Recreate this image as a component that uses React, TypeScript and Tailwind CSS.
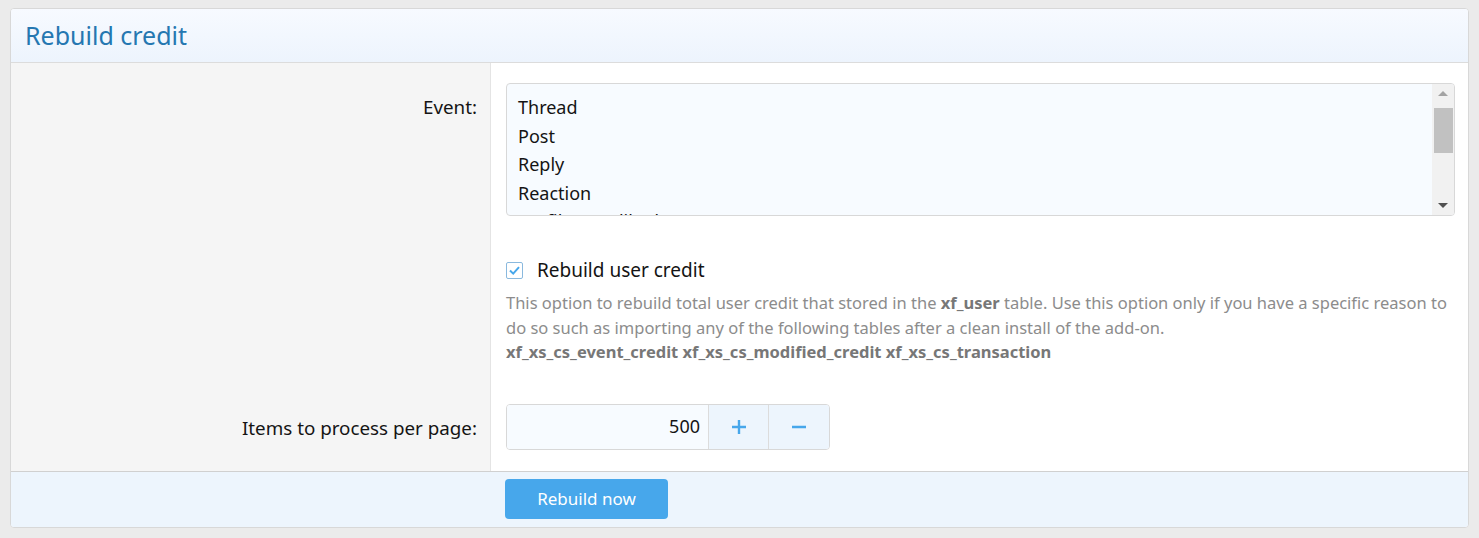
const FONT = { fontFamily: '"Noto Sans", "Open Sans", sans-serif' };

const events = ["Thread", "Post", "Reply", "Reaction", "Profile post liked"];

function FakeScrollbar() {
  return (
    <div className="flex w-[22px] shrink-0 flex-col items-center bg-[#f1f1f1]">
      <svg width="20" height="18" viewBox="0 0 20 18" className="shrink-0">
        <path d="M5 12 L10 7 L15 12 Z" fill="#a3a3a3" />
      </svg>
      <div className="mt-[6px] h-[45px] w-[19px] bg-[#c1c1c1]" />
      <div className="flex-1" />
      <svg width="20" height="18" viewBox="0 0 20 18" className="shrink-0">
        <path d="M5 6 L10 11 L15 6 Z" fill="#505050" />
      </svg>
    </div>
  );
}

function Label({ children, pt }: { children: string; pt: string }) {
  return (
    <div className={`w-[480px] shrink-0 border-r border-[#e4e4e4] bg-[#f5f5f5] pr-[13px] text-right text-[18.8px] leading-[28px] text-[#141414] ${pt}`}>
      {children}
    </div>
  );
}

export default function App() {
  return (
    <div className="min-h-[538px] w-full bg-[#ebebeb] px-[10px] pt-[8px]" style={FONT}>
      <div className="overflow-hidden rounded-[4px] border border-[#d8d8d8] bg-white">
        {/* header */}
        <div className="h-[54px] border-b border-[#dcdcdc] bg-gradient-to-b from-[#f7faff] to-[#edf4fd] pl-[14px] pt-[10px]">
          <h2 className="text-[25px] leading-[32px] text-[#2577b1]">Rebuild credit</h2>
        </div>

        {/* Event */}
        <div className="flex">
          <Label pt="pt-[30px]">Event:</Label>
          <div className="flex-1 pl-[15px] pr-[13px] pt-[20px] pb-[22px]">
            <div className="flex h-[133px] overflow-hidden rounded-[4px] border border-[#d8d8d8] bg-[#f7fbff]">
              <div className="h-full flex-1 overflow-hidden px-[11px] pt-[9px] text-[18px] leading-[28.5px] text-[#141414]">
                {events.map((e) => (
                  <div key={e}>{e}</div>
                ))}
              </div>
              <FakeScrollbar />
            </div>
          </div>
        </div>

        {/* Rebuild user credit */}
        <div className="flex">
          <Label pt="pt-[20px]"> </Label>
          <div className="flex-1 pl-[15px] pr-[13px] pt-[20px] pb-[18px]">
            <label className="flex h-[24px] items-center gap-[14px] text-[19px] text-[#141414]">
              <svg width="17" height="17" viewBox="0 0 17 17" className="shrink-0">
                <rect x="0.5" y="0.5" width="16" height="16" rx="1.5" fill="#fff" stroke="#8ab9de" />
                <path d="M4 8.5 L7.2 11.6 L13 5.2" fill="none" stroke="#47a7eb" strokeWidth="2" />
              </svg>
              Rebuild user credit
            </label>
            <div className="mt-[9px] text-[16.5px] leading-[24.5px] text-[#8c8c8c]">
              This option to rebuild total user credit that stored in the{" "}
              <b className="font-bold text-[#777]">xf_user</b> table. Use this option only if you have a specific reason to do
              so such as importing any of the following tables after a clean install of the add-on.
              <div className="font-bold text-[#777]">
                xf_xs_cs_event_credit xf_xs_cs_modified_credit xf_xs_cs_transaction
              </div>
            </div>
          </div>
        </div>

        {/* Items per page */}
        <div className="flex">
          <Label pt="pt-[31px]">Items to process per page:</Label>
          <div className="flex-1 pl-[15px] pt-[21px] pb-[21px]">
            <div className="flex h-[46px] w-[324px] overflow-hidden rounded-[4px] border border-[#d8d8d8]">
              <div className="flex flex-1 items-center justify-end bg-[#f7fbff] pr-[8px] text-[18px] text-[#141414]">500</div>
              <button className="flex w-[60px] items-center justify-center border-l border-[#dcdcdc] bg-[#edf5fd]">
                <svg width="16" height="16" viewBox="0 0 16 16">
                  <path d="M8 1 V15 M1 8 H15" stroke="#47a7eb" strokeWidth="2.4" />
                </svg>
              </button>
              <button className="flex w-[61px] items-center justify-center border-l border-[#dcdcdc] bg-[#edf5fd]">
                <svg width="16" height="16" viewBox="0 0 16 16">
                  <path d="M1 8 H15" stroke="#47a7eb" strokeWidth="2.4" />
                </svg>
              </button>
            </div>
          </div>
        </div>

        {/* footer */}
        <div className="h-[56px] border-t border-[#d0d0d0] bg-[#edf5fd] pl-[494px] pt-[7px]">
          <button className="h-[40px] w-[163px] rounded-[4px] bg-[#47a7eb] text-[17px] text-white">Rebuild now</button>
        </div>
      </div>
    </div>
  );
}
